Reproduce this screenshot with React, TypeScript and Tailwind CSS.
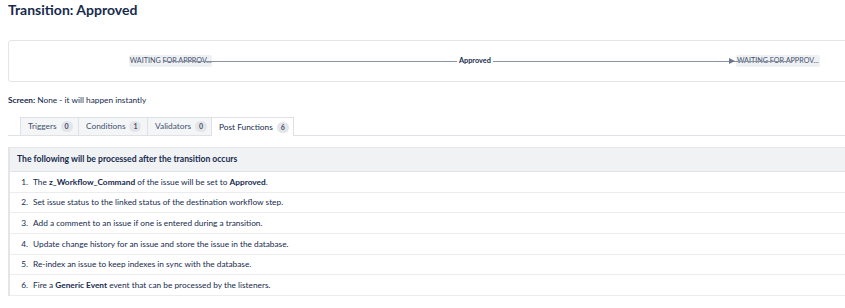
import React from "react";

const rows: React.ReactNode[] = [
  <>The <b>z_Workflow_Command</b> of the issue will be set to <b>Approved</b>.</>,
  <>Set issue status to the linked status of the destination workflow step.</>,
  <>Add a comment to an issue if one is entered during a transition.</>,
  <>Update change history for an issue and store the issue in the database.</>,
  <>Re-index an issue to keep indexes in sync with the database.</>,
  <>Fire a <b>Generic Event</b> event that can be processed by the listeners.</>,
];

const tabs = [
  { label: "Triggers", n: 0, w: "w-[58px]" },
  { label: "Conditions", n: 1, w: "w-[69px]" },
  { label: "Validators", n: 0, w: "w-[64px]" },
];

function Badge({ n }: { n: number }) {
  return (
    <span className="ml-[4px] inline-flex h-[11px] min-w-[12px] items-center justify-center rounded-full bg-[#e4e5e9] px-[3px] text-[7px] font-bold text-[#42526e]">
      {n}
    </span>
  );
}

export default function App() {
  return (
    <div className="h-[308px] w-[845px] overflow-hidden bg-white font-['Lato',sans-serif] text-[#172b4d]">
      <div className="h-[20px] pl-2 text-[14px] font-bold leading-[20px] text-[#172b4d]">
        Transition: Approved
      </div>

      <div className="relative ml-2 mt-[20px] flex h-[42px] w-[860px] items-center rounded-[3px] border border-[#e4e5e9] pl-[120px]">
        <span className="flex h-[12px] w-[83px] items-center justify-center rounded-[2px] bg-[#eef0f3] text-[7.2px] uppercase text-[#42526e]">
          Waiting for approv...
        </span>
        <span className="w-[245px]" />
        <span className="relative z-10 bg-white px-[2px] text-[7.3px] font-bold text-[#172b4d]">Approved</span>
        <span className="w-[236px]" />
        <span className="relative z-10 flex w-[7px] items-center">
          <svg width="6" height="6" viewBox="0 0 6 6">
            <path d="M0 0 L6 3 L0 6 Z" fill="#6b778c" />
          </svg>
        </span>
        <span className="flex h-[12px] w-[84px] items-center justify-center rounded-[2px] bg-[#eef0f3] text-[7.2px] uppercase text-[#42526e]">
          Waiting for approv...
        </span>
        <div className="absolute left-[154px] top-1/2 h-px w-[630px] bg-[#8993a4]" />
      </div>

      <div className="mt-[12px] h-[12px] pl-2 text-[8.3px] leading-[12px] text-[#172b4d]">
        <b>Screen:</b> None - it will happen instantly
      </div>

      <div className="ml-2 mt-[11px] flex h-[19px] items-end border-b border-[#dfe1e6] pl-3">
        {tabs.map((t) => (
          <div
            key={t.label}
            className={`flex h-[18px] ${t.w} items-center border border-b-0 border-r-0 border-[#dfe1e6] bg-[#f4f5f7] pl-[7px] text-[8.3px] text-[#42526e]`}
          >
            {t.label}
            <Badge n={t.n} />
          </div>
        ))}
        <div className="-mb-px flex h-[19px] w-[83px] items-center border border-b-0 border-[#dfe1e6] bg-white pl-[7px] text-[8.3px] text-[#172b4d]">
          Post Functions
          <Badge n={6} />
        </div>
      </div>

      <div className="ml-2 mt-[11px] w-[840px] border-l-2 border-t border-[#e4e5e9]">
        <div className="flex h-[24px] items-center border-b border-[#e1e3e8] bg-[#f1f2f4] pl-[7px] text-[8.6px] font-bold text-[#172b4d]">
          The following will be processed after the transition occurs
        </div>
        {rows.map((r, i) => (
          <div key={i} className="flex h-[20.7px] items-center border-b border-[#ebecf0] text-[8.3px] text-[#172b4d]">
            <span className="w-[18px] text-right">{i + 1}.</span>
            <span className="ml-[5px]">{r}</span>
          </div>
        ))}
      </div>
    </div>
  );
}
